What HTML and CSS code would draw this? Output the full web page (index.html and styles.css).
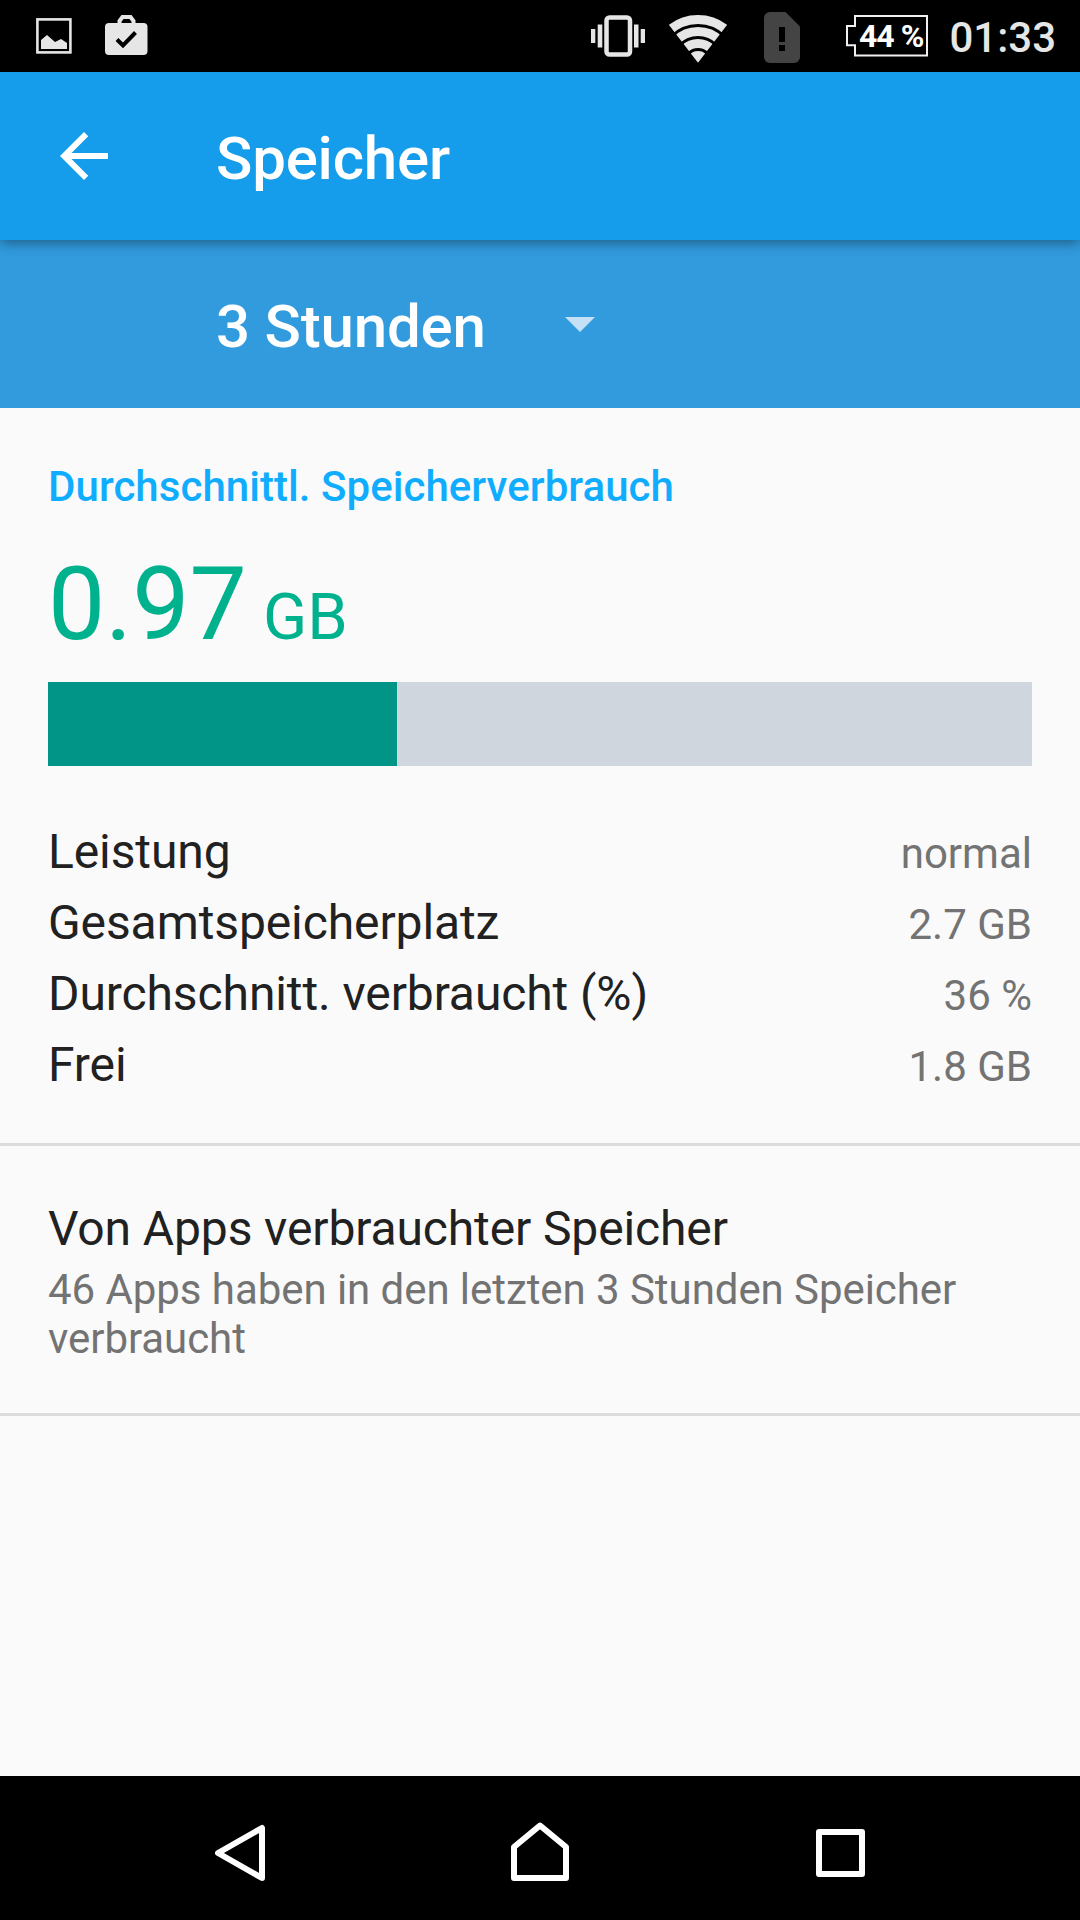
FILE: index.html
```
<!doctype html>
<html lang="de">
<head>
	<meta charset="UTF-8">
	<meta name="viewport" content="width=device-width,initial-scale=1.0">
	<title>Speicher</title>
	<link rel="stylesheet" href="styles.css">
</head>
<body>
	<div class="statusbar">
		<div class="notifications">
			<svg width="36" height="72" viewBox="0 0 36 72">
				<rect x="1.4" y="19.4" width="33" height="33" fill="none" stroke="#e6e6e6" stroke-width="2.6"/>
				<path d="M5 49V40l6-5 8 7 6-3 6 4v6z" fill="#e6e6e6"/>
			</svg>
			<svg width="43" height="72" viewBox="0 0 43 72">
				<path d="M14.5 25v-4l3-4h8l3 4v4" fill="none" stroke="#e6e6e6" stroke-width="4"/>
				<rect x="0" y="23" width="42.5" height="32" rx="4" fill="#e6e6e6"/>
				<path d="M12 39.5l6 6L30.5 32.5" fill="none" stroke="#000" stroke-width="4"/>
			</svg>
		</div>
		<div class="system">
			<svg class="vibrate" width="54" height="72" viewBox="0 0 54 72">
				<rect x="15.5" y="17.5" width="23.5" height="37" rx="3" fill="none" stroke="#e6e6e6" stroke-width="4.5"/>
				<path d="M0 29h4.3v14H0zM6.7 24.5h4.6v23H6.700zM43 24.5h4.5v23H43zM49.7 29H54v14h-4.3z" fill="#e6e6e6"/>
			</svg>
			<svg class="wifi" width="58" height="72" viewBox="0 0 58 72">
				<clipPath id="wedge"><path d="M29 62.7L-7 16V0h72v16z"/></clipPath>
				<g clip-path="url(#wedge)" fill="none" stroke="#e6e6e6" stroke-width="9">
					<circle cx="29" cy="62.7" r="43.2"/>
					<circle cx="29" cy="62.7" r="31.2"/>
					<circle cx="29" cy="62.7" r="19.2"/>
					<circle cx="29" cy="62.7" r="11.6" fill="#e6e6e6" stroke="none"/>
				</g>
			</svg>
			<svg class="sim" width="36" height="72" viewBox="0 0 36 72">
				<path d="M6 12h15.5L36 26.5V57a6 6 0 0 1-6 6H6a6 6 0 0 1-6-6V18a6 6 0 0 1 6-6z" fill="#444"/>
				<path d="M15 27h6v15h-6zM15 45h6v6h-6z" fill="#000"/>
			</svg>
			<svg class="battery" width="84" height="72" viewBox="0 0 84 72">
				<path d="M10 16h72v39.5H10V45.3H2V26h8z" fill="none" stroke="#f2eef2" stroke-width="2"/>
				<text x="14" y="46.5">44 %</text>
			</svg>
			<span class="clock">01:33</span>
		</div>
	</div>

	<div class="appbar">
		<svg width="72" height="72" viewBox="0 0 24 24">
			<path d="M20 11H7.83l5.59-5.59L12 4l-8 8 8 8 1.41-1.41L7.83 13H20v-2z" fill="#fff"/>
		</svg>
		<h1>Speicher</h1>
	</div>
	<div class="spinner">
		<span>3 Stunden</span>
		<svg width="30" height="15" viewBox="0 0 30 15"><path d="M0 0h30L15 15z" fill="#c4e1f5"/></svg>
	</div>

	<div class="content">
		<div class="usage">
			<h2>Durchschnittl. Speicherverbrauch</h2>
			<p class="amount">0.97<small> GB</small></p>
			<div class="bar"><div class="fill" style="width:35.47%"></div></div>
			<div class="row"><span>Leistung</span><em>normal</em></div>
			<div class="row"><span>Gesamtspeicherplatz</span><em>2.7 GB</em></div>
			<div class="row"><span>Durchschnitt. verbraucht (%)</span><em>36 %</em></div>
			<div class="row"><span>Frei</span><em>1.8 GB</em></div>
		</div>
		<div class="apps">
			<h3>Von Apps verbrauchter Speicher</h3>
			<p>46 Apps haben in den letzten 3 Stunden Speicher verbraucht</p>
		</div>
	</div>

	<div class="navbar">
		<svg width="60" height="144" viewBox="0 0 60 144">
			<path d="M8 77l44-25v50z"/>
		</svg>
		<svg width="60" height="144" viewBox="0 0 60 144">
			<path d="M30 49.5L56 71v31H4V71z"/>
		</svg>
		<svg width="60" height="144" viewBox="0 0 60 144">
			<path d="M9 56h43v42H9z"/>
		</svg>
	</div>
</body>
</html>
```

FILE: styles.css
```
*{
	margin: 0;
	padding: 0;
	box-sizing: border-box;
}
body{
	width: 1080px;
	height: 1920px;
	display: flex;
	flex-direction: column;
	background: #fafafa;
	font-family: Roboto, "Noto Sans", sans-serif;
	overflow: hidden;
}
svg{
	display: block;
	flex: none;
}

/* status bar */
.statusbar{
	height: 72px;
	padding: 0 24px 0 36px;
	display: flex;
	justify-content: space-between;
	background: #000;
}
.notifications{
	display: flex;
	gap: 33px;
}
.system{
	display: flex;
}
.wifi{
	margin-left: 24px;
}
.sim{
	margin-left: 37px;
}
.battery{
	margin-left: 45px;
	margin-right: 20px;
}
.battery text{
	font-size: 32px;
	font-weight: 700;
	letter-spacing: -1px;
	fill: #fff;
}
.clock{
	font-size: 42px;
	font-weight: 500;
	line-height: 75px;
	color: #e6e6e6;
}

/* header */
.appbar{
	position: relative;
	height: 168px;
	padding-left: 48px;
	display: flex;
	align-items: center;
	gap: 96px;
	background: #159deb;
	box-shadow: 0 3px 12px rgba(0,0,0,.4);
}
.appbar h1, .spinner span{
	font-size: 60px;
	font-weight: 500;
	line-height: 70px;
	letter-spacing: -.2px;
	padding-top: 5px;
	color: #fff;
}
.spinner{
	height: 168px;
	padding-left: 216px;
	display: flex;
	align-items: center;
	background: #319bde;
}
.spinner span{
	width: 349px;
}
.spinner svg{
	margin-top: 1px;
}

/* content */
.content{
	flex: 1;
}
.usage{
	padding: 54px 48px 43px;
	border-bottom: 3px solid #dcdcdc;
}
.usage h2{
	font-size: 42px;
	font-weight: 500;
	line-height: 50px;
	letter-spacing: .05px;
	color: #10adff;
}
.amount{
	margin: 32px 0 18px;
	font-size: 102px;
	line-height: 120px;
	color: #00b18d;
}
.amount small{
	font-size: 65px;
	line-height: 1;
}
.bar{
	height: 84px;
	margin-bottom: 50px;
	background: #cfd6dd;
}
.fill{
	height: 100%;
	background: #009587;
}
.row{
	display: flex;
	justify-content: space-between;
	align-items: baseline;
	height: 71px;
	font-size: 48px;
	line-height: 71px;
	color: #212121;
}
.row span{
	letter-spacing: -.1px;
}
.row em{
	font-size: 42px;
	font-style: normal;
	line-height: 1;
	color: #737373;
}
.apps{
	padding: 55px 48px 50px;
	border-bottom: 3px solid #dcdcdc;
}
.apps h3{
	font-size: 48px;
	font-weight: 400;
	line-height: 56px;
	letter-spacing: -.12px;
	color: #212121;
}
.apps p{
	margin-top: 8px;
	font-size: 42px;
	line-height: 49px;
	letter-spacing: -.06px;
	color: #737373;
}

/* navigation bar */
.navbar{
	height: 144px;
	padding: 0 210px;
	display: flex;
	justify-content: space-between;
	background: #000;
}
.navbar path{
	fill: none;
	stroke: #fff;
	stroke-width: 6;
	stroke-linejoin: round;
}
```
